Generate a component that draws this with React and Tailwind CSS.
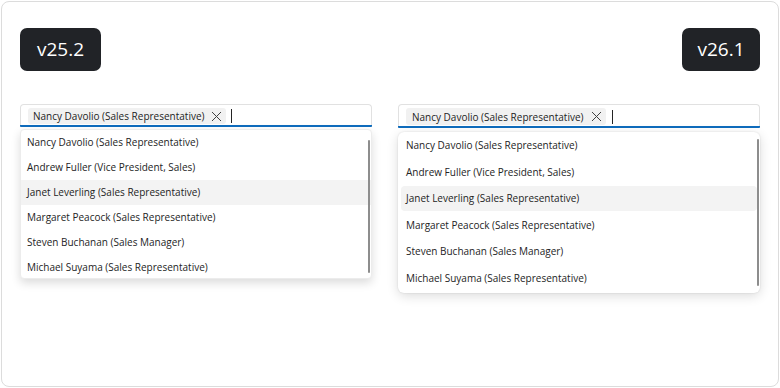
import React from 'react';

const people = [
  'Nancy Davolio (Sales Representative)',
  'Andrew Fuller (Vice President, Sales)',
  'Janet Leverling (Sales Representative)',
  'Margaret Peacock (Sales Representative)',
  'Steven Buchanan (Sales Manager)',
  'Michael Suyama (Sales Representative)',
];

const font = { fontFamily: '"Segoe UI", "Open Sans", sans-serif' };

const Badge = ({ label, wide }) => (
  <div className={`h-[43px] rounded-[7px] bg-[#212327] text-white text-[19px] font-medium flex items-center justify-center ${wide ? 'w-[81px]' : 'w-[78px]'}`}>
    {label}
  </div>
);

const Close = () => (
  <svg width="11" height="11" viewBox="0 0 11 11" className="shrink-0">
    <path d="M1 1 L10 10 M10 1 L1 10" stroke="#424242" strokeWidth="1" fill="none" />
  </svg>
);

const TagInput = ({ tall }) => (
  <div
    className={`flex items-center border border-[#e1e1e1] border-b-0 rounded-t-[4px] bg-white relative ${tall ? 'h-[24px] pl-[7px]' : 'h-[23px] pl-[7px]'}`}
  >
    <div className={`flex items-center bg-[#f1f1f1] rounded-[3px] ${tall ? 'h-[17px] pl-[6px] pr-[4px] gap-[8px]' : 'h-[16px] pl-[5px] pr-[4px] gap-[7px]'}`}>
      <span className="text-[10px] font-medium text-[#242424] leading-none whitespace-nowrap">
        Nancy Davolio (Sales Representative)
      </span>
      <Close />
    </div>
    <div className={`w-px h-[14px] bg-[#242424] ${tall ? 'ml-[6px]' : 'ml-[5px]'}`} />
    <div className="absolute left-[-1px] right-[-1px] bottom-0 h-[2px] bg-[#0f6cbd] rounded-b-[1px]" />
  </div>
);

const OldList = () => (
  <div className="mt-[2px] h-[150px] bg-white rounded-[4px] border border-[#ececec] shadow-[0_4px_10px_rgba(0,0,0,0.14)] relative overflow-hidden">
    {people.map((p, i) => (
      <div
        key={p}
        className={`h-[25px] flex items-center pl-[6px] text-[10px] text-[#242424] whitespace-nowrap ${i === 2 ? 'bg-[#f3f3f3]' : ''}`}
      >
        {p}
      </div>
    ))}
    <div className="absolute right-[1px] top-[10px] bottom-[5px] w-[2px] rounded-full bg-[#8d8d8d]" />
  </div>
);

const NewList = () => (
  <div className="mt-[4px] h-[161px] bg-white rounded-[6px] shadow-[0_3px_12px_rgba(0,0,0,0.14),0_0_2px_rgba(0,0,0,0.12)] relative pt-[1px] flex flex-col gap-[1.6px]">
    {people.map((p, i) => (
      <div
        key={p}
        className={`h-[25px] mx-[3px] rounded-[4px] flex items-center pl-[5px] text-[10px] text-[#242424] whitespace-nowrap ${i === 2 ? 'bg-[#f3f3f3]' : ''}`}
      >
        {p}
      </div>
    ))}
    <div className="absolute right-[1px] top-[7px] bottom-[7px] w-[2px] rounded-full bg-[#8d8d8d]" />
  </div>
);

export default function App() {
  return (
    <div className="w-[780px] h-[388px] bg-white p-px" style={font}>
      <div className="h-full rounded-[8px] border border-[#dcdcdc] flex justify-between pl-[18px] pr-[18px] pt-[26px]">
        <div className="w-[352px]">
          <div className="flex">
            <Badge label="v25.2" wide />
          </div>
          <div className="mt-[33px]">
            <TagInput />
            <OldList />
          </div>
        </div>
        <div className="w-[362px]">
          <div className="flex justify-end">
            <Badge label="v26.1" />
          </div>
          <div className="mt-[33px]">
            <TagInput tall />
            <NewList />
          </div>
        </div>
      </div>
    </div>
  );
}
